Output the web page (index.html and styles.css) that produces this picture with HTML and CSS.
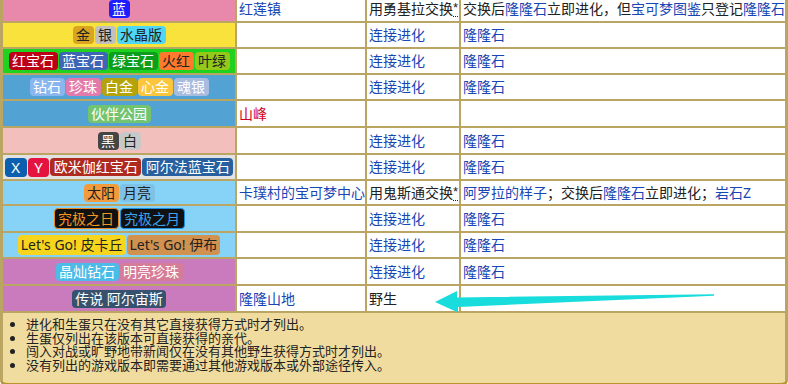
FILE: index.html
```html
<!DOCTYPE html>
<html lang="zh">
<head>
<meta charset="utf-8">
<title>获得方式</title>
<link rel="stylesheet" href="styles.css">
</head>
<body>
<div class="frame">
<table class="loc">
<colgroup><col class="c1"><col class="c2"><col class="c3"><col class="c4"></colgroup>
<tr class="h24">
<td class="ver pink"><div class="bs"><span class="b b-blue">蓝</span></div></td>
<td><a class="lk">红莲镇</a></td>
<td class="how">用勇基拉交换<abbr class="ast">*</abbr></td>
<td>交换后<a class="lk">隆隆石</a>立即进化，但<a class="lk">宝可梦图鉴</a>只登记<a class="lk">隆隆石</a></td>
</tr>
<tr class="h24">
<td class="ver yellow"><div class="bs"><span class="b dk gold">金</span><span class="b dk silver">银</span><span class="b dk crystal">水晶版</span></div></td>
<td></td><td class="how"><a class="lk">连接进化</a></td><td><a class="lk">隆隆石</a></td>
</tr>
<tr class="h24">
<td class="ver green"><div class="bs"><span class="b ruby">红宝石</span><span class="b sapphire">蓝宝石</span><span class="b emerald">绿宝石</span><span class="b dk firered">火红</span><span class="b dk leafgreen">叶绿</span></div></td>
<td></td><td class="how"><a class="lk">连接进化</a></td><td><a class="lk">隆隆石</a></td>
</tr>
<tr class="h24">
<td class="ver steel"><div class="bs"><span class="b diamond">钻石</span><span class="b pearl">珍珠</span><span class="b platinum">白金</span><span class="b heartgold">心金</span><span class="b soulsilver">魂银</span></div></td>
<td></td><td class="how"><a class="lk">连接进化</a></td><td><a class="lk">隆隆石</a></td>
</tr>
<tr class="h25">
<td class="ver steel"><div class="bs"><span class="b park">伙伴公园</span></div></td>
<td><a class="lk red">山峰</a></td><td class="how"></td><td></td>
</tr>
<tr class="h25">
<td class="ver rose"><div class="bs"><span class="b black">黑</span><span class="b dk white">白</span></div></td>
<td></td><td class="how"><a class="lk">连接进化</a></td><td><a class="lk">隆隆石</a></td>
</tr>
<tr class="h24">
<td class="ver grey"><div class="bs"><span class="b xy x">X</span><span class="b xy y">Y</span><span class="b oruby">欧米伽红宝石</span><span class="b asapph">阿尔法蓝宝石</span></div></td>
<td></td><td class="how"><a class="lk">连接进化</a></td><td><a class="lk">隆隆石</a></td>
</tr>
<tr class="h23">
<td class="ver sky"><div class="bs"><span class="b dk sun">太阳</span><span class="b dk moon">月亮</span></div></td>
<td><a class="lk">卡璞村的宝可梦中心</a></td>
<td class="how">用鬼斯通交换<abbr class="ast">*</abbr></td>
<td><a class="lk">阿罗拉的样子</a>；交换后<a class="lk">隆隆石</a>立即进化；<a class="lk">岩石Z</a></td>
</tr>
<tr class="h25">
<td class="ver sky"><div class="bs"><span class="b usun">究极之日</span><span class="b umoon">究极之月</span></div></td>
<td></td><td class="how"><a class="lk">连接进化</a></td><td><a class="lk">隆隆石</a></td>
</tr>
<tr class="h24">
<td class="ver sky"><div class="bs"><span class="b lg dk pika">Let's Go! 皮卡丘</span><span class="b lg dk eevee">Let's Go! 伊布</span></div></td>
<td></td><td class="how"><a class="lk">连接进化</a></td><td><a class="lk">隆隆石</a></td>
</tr>
<tr class="h25">
<td class="ver orchid"><div class="bs"><span class="b bdiamond">晶灿钻石</span><span class="b spearl">明亮珍珠</span></div></td>
<td></td><td class="how"><a class="lk">连接进化</a></td><td><a class="lk">隆隆石</a></td>
</tr>
<tr class="h25">
<td class="ver orchid"><div class="bs"><span class="b arceus">传说 阿尔宙斯</span></div></td>
<td><a class="lk">隆隆山地</a></td><td class="how">野生</td><td></td>
</tr>
<tr>
<td class="notes" colspan="4">
<ul>
<li>进化和生蛋只在没有其它直接获得方式时才列出。</li>
<li>生蛋仅列出在该版本可直接获得的亲代。</li>
<li>闯入对战或旷野地带新闻仅在没有其他野生获得方式时才列出。</li>
<li>没有列出的游戏版本即需要通过其他游戏版本或外部途径传入。</li>
</ul>
</td>
</tr>
</table>
</div>
<svg class="arrow" width="788" height="384" viewBox="0 0 788 384" aria-hidden="true">
<polygon points="435,302 457,291 457,297.5 714,294.3 714,295.8 458,307 458,312.5" fill="#19dcdc"/>
</svg>
</body>
</html>
```
FILE: styles.css
```css
html, body {
  margin: 0;
  padding: 0;
  background: #ffffff;
}
body {
  width: 788px;
  height: 384px;
  overflow: hidden;
  position: relative;
  font-family: "Noto Sans", "Noto Sans CJK SC", sans-serif;
  font-size: 14px;
  color: #202122;
}
.frame {
  width: 788px;
  box-sizing: border-box;
  margin-top: -6px;
  padding: 1px 1px 0 1px;
  background: #bba562;
  border-bottom: 5px solid #b9952f;
  border-radius: 0 0 9px 9px;
  overflow: hidden;
}
.loc {
  width: 786px;
  table-layout: fixed;
  border-collapse: separate;
  border-spacing: 2px;
  margin-bottom: -2px;
}
.c1 { width: 232px; }
.c2 { width: 128px; }
.c3 { width: 92px; }
.c4 { width: 324px; }
.loc td {
  background: #ffffff;
  padding: 0 2px;
  line-height: 18px;
  white-space: nowrap;
  overflow: hidden;
  vertical-align: middle;
}
.loc td.how {
  padding: 0 0 0 2px;
  overflow: visible;
}
.h23 td { height: 23px; }
.h24 td { height: 24px; }
.h25 td { height: 25px; }
.loc td.ver { padding: 0; text-align: center; }
.lk { color: #1846b4; text-decoration: none; }
.lk.red { color: #d2001a; }
.ast {
  font-family: "Liberation Sans", sans-serif;
  font-size: 13px;
  text-decoration: none;
  border-bottom: 1px dotted #202122;
  line-height: 14px;
  display: inline-block;
  height: 15px;
  vertical-align: top;
  margin-top: 1px;
}
.bs {
  display: flex;
  justify-content: center;
  align-items: center;
  gap: 1px;
}
.b {
  display: inline-block;
  height: 18px;
  line-height: 18px;
  padding: 0 3.5px;
  border-radius: 4px;
  color: #ffffff;
  font-size: 14px;
  white-space: nowrap;
}
.b.dk { color: #222222; }
.b.lg { height: 20px; line-height: 20px; padding: 0 3px; }
.b.xy { height: 19px; line-height: 19px; padding: 0 6.5px; font-size: 15px; }

/* row backgrounds */
.pink { background: #e889ab !important; }
.yellow { background: #fae23d !important; }
.green { background: #1ed21e !important; }
.steel { background: #52a3d4 !important; }
.rose { background: #f3bfbd !important; }
.grey { background: #e2e2e2 !important; }
.sky { background: #87d3f8 !important; }
.orchid { background: #c97bbd !important; }

/* badges */
.b-blue { background: #1e1eff; }
.gold { background: #d9a521; }
.silver { background: #c0c0c0; }
.crystal { background: #4fd5f6; }
.ruby { background: #bc0015; }
.sapphire { background: #3e66b5; }
.emerald { background: #0c9e1c; }
.firered { background: #ff7a2c; }
.leafgreen { background: #94c91a; }
.diamond { background: #8ab6ef; }
.pearl { background: #e27bac; }
.platinum { background: #b5a30b; }
.heartgold { background: #fbc53c; }
.soulsilver { background: #a8bce0; }
.park { background: #72c471; }
.black { background: #454545; }
.white { background: #c8c8c8; }
.x { background: #0c5fae; }
.y { background: #e4133f; }
.oruby { background: #ae2a1f; }
.asapph { background: #28609f; }
.sun { background: #f29b3c; }
.moon { background: #7ec3e5; }
.usun {
  background: #111111;
  border: 1px solid #e88a20;
  color: #f59520;
  height: 19px;
  line-height: 19px;
  padding: 0 3.5px;
}
.umoon {
  background: #111111;
  border: 1px solid #1f8fe0;
  color: #3aa2f0;
  height: 19px;
  line-height: 19px;
  padding: 0 3.5px;
}
.pika { background: #f7d51d; }
.eevee { background: #d1914f; }
.bdiamond { background: #4cbbe7; }
.spearl { background: #d57c98; }
.arceus { background: #37526f; }

/* notes */
.loc td.notes {
  background: #f1dca0;
  height: 62px;
  padding: 5px 0 3px 0;
  vertical-align: top;
  font-size: 13px;
}
.notes ul {
  margin: 0;
  padding-left: 23px;
  list-style: disc;
}
.notes li {
  line-height: 13.5px;
  color: #222222;
}

.arrow {
  position: absolute;
  left: 0;
  top: 0;
  pointer-events: none;
}
```
